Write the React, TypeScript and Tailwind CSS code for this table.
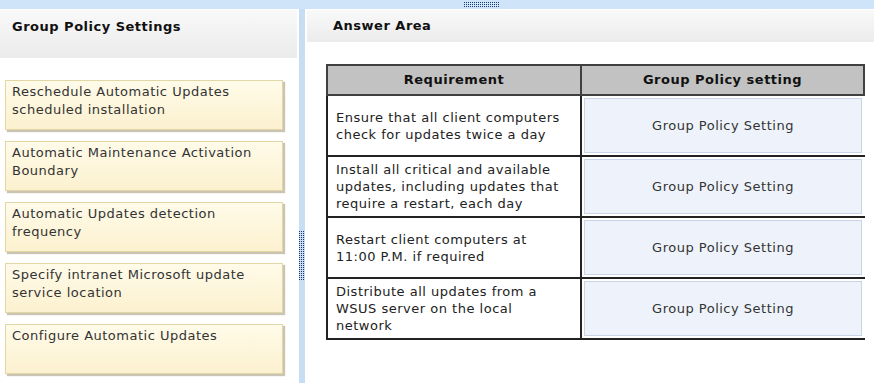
const settings = [
  'Reschedule Automatic Updates scheduled installation',
  'Automatic Maintenance Activation Boundary',
  'Automatic Updates detection frequency',
  'Specify intranet Microsoft update service location',
  'Configure Automatic Updates',
]

const requirements = [
  'Ensure that all client computers check for updates twice a day',
  'Install all critical and available updates, including updates that require a restart, each day',
  'Restart client computers at 11:00 P.M. if required',
  'Distribute all updates from a WSUS server on the local network',
]

// dotted drag handle used on the splitters
function Grip({ w, h, id }: { w: number; h: number; id: string }) {
  return (
    <svg width={w} height={h} className="block">
      <defs>
        <pattern id={id} width="2" height="2" patternUnits="userSpaceOnUse">
          <rect width="1" height="1" fill="#1a3a74" />
        </pattern>
      </defs>
      <rect width={w} height={h} fill={`url(#${id})`} />
    </svg>
  )
}

function SettingCard({ label }: { label: string }) {
  return (
    <div className="h-[50px] border border-[#e2d6a4] bg-gradient-to-b from-[#fffbe9] to-[#fcf1cf] px-[6px] pt-[2px] leading-[18px] text-[#333] shadow-[2px_2px_1px_#c9c4b4]">
      {label}
    </div>
  )
}

export default function App() {
  return (
    <div className="flex h-[383px] w-[874px] flex-col overflow-hidden bg-white font-['DejaVu_Sans',Verdana,sans-serif] text-[13px] tracking-[0.5px]">
      {/* top splitter band */}
      <div className="flex h-[9px] shrink-0 justify-center bg-[#cfe4f8] pl-[88px] pt-[2px]">
        <Grip w={35} h={6} id="grip-h" />
      </div>

      <div className="mt-px flex flex-1">
        {/* Group Policy Settings panel */}
        <div className="flex w-[297px] flex-col">
          <div className="h-[48px] bg-gradient-to-b from-[#f9f9f9] to-[#ebebeb] pl-[12px] pt-[7px] font-bold text-[#111]">
            Group Policy Settings
          </div>
          <div className="flex flex-col gap-[11px] pl-[5px] pr-[14px] pt-[22px]">
            {settings.map(s => (
              <SettingCard key={s} label={s} />
            ))}
          </div>
        </div>

        {/* vertical splitter */}
        <div className="-mt-px flex w-[10px] flex-col items-center border-x-[2px] border-white bg-[#c7ddf4] pt-[222px]">
          <Grip w={6} h={50} id="grip-v" />
        </div>

        {/* Answer Area panel */}
        <div className="flex flex-1 flex-col">
          <div className="flex h-[32px] items-center bg-gradient-to-b from-[#f9f9f9] to-[#ececec] pl-[26px] font-bold text-[#111]">
            Answer Area
          </div>

          <div className="ml-[19px] mt-[22px] w-[539px] text-[#222]">
            <div className="flex h-[32px] border-2 border-[#404040] bg-[#c2c2c2] font-bold text-[#111]">
              <div className="flex w-[254px] items-center justify-center border-r-2 border-[#404040]">Requirement</div>
              <div className="flex flex-1 items-center justify-center">Group Policy setting</div>
            </div>
            {requirements.map(r => (
              <div key={r} className="flex h-[61px] border-b-2 border-[#222]">
                <div className="flex w-[256px] items-center border-x-2 border-[#222] pl-[8px] pr-[14px] leading-[17px]">
                  <span>{r}</span>
                </div>
                <div className="flex flex-1 p-[2px] pr-[3px]">
                  <div className="flex flex-1 items-center justify-center border border-[#c9d5e6] bg-[#eef3fb] text-[#333]">
                    Group Policy Setting
                  </div>
                </div>
              </div>
            ))}
          </div>
        </div>
      </div>
    </div>
  )
}
